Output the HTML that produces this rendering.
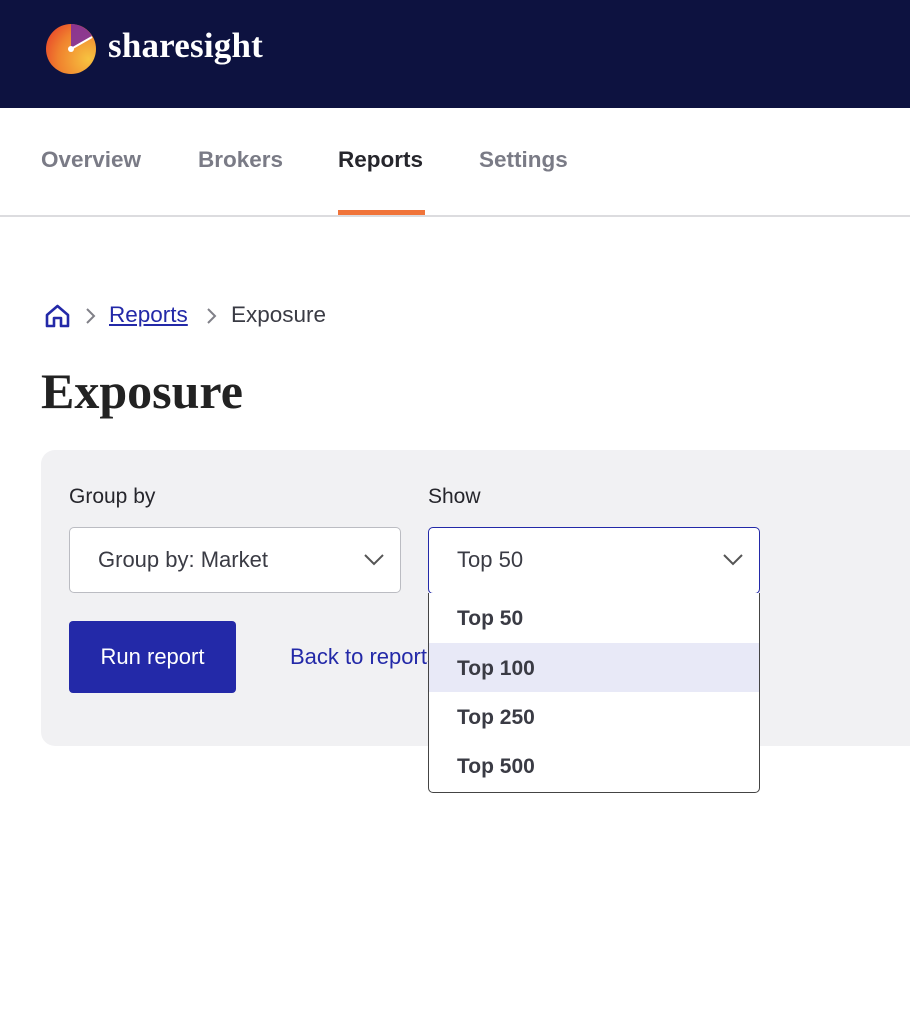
<!DOCTYPE html>
<html><head><style>
body{margin:0;width:910px;height:1036px;background:#fff;font-family:"Liberation Sans",sans-serif;position:relative;overflow:hidden}
.hdr{position:absolute;left:0;top:0;width:910px;height:108px;background:#0d1240}
.logo{position:absolute;left:46px;top:24px;width:50px;height:50px;border-radius:50%;background:radial-gradient(circle at 85% 70%,#f7c340,#f0822e 55%,#e7442a 90%)}
.brand{position:absolute;left:108px;top:26px;color:#fff;font:bold 35px "Liberation Serif",serif;letter-spacing:0.2px}
.nav{position:absolute;top:147px;font-size:22.5px;font-weight:bold;color:#7a7b86}
.line{position:absolute;left:0;top:215px;width:910px;height:2px;background:#dcdcdf}
.ul{position:absolute;left:338px;top:210px;width:87px;height:5px;background:#f0743a}
.panel{position:absolute;left:41px;top:450px;width:900px;height:296px;background:#f1f1f3;border-radius:14px}
.lbl{position:absolute;top:485px;font-size:21px;color:#26262c}
.sel{position:absolute;top:527px;width:332px;height:66px;box-sizing:border-box;border:1.5px solid #bbbcc2;border-radius:5px;background:#fff;font-size:22px;color:#3a3b44;padding:19px 0 0 28px}
.btn{position:absolute;left:69px;top:621px;width:167px;height:72px;background:#2329a8;border-radius:4px;color:#fff;font-size:22px;text-align:center;line-height:72px}
.menu{position:absolute;left:428px;top:593px;width:332px;height:200px;box-sizing:border-box;border:1.5px solid #444;border-top:none;border-radius:0 0 5px 5px;background:#fff}
.opt{height:49px;line-height:52px;padding-left:28px;font-size:21px;font-weight:bold;color:#3a3b44}
</style></head><body>
<div class="hdr"></div>
<div class="logo"><svg width="50" height="50" style="position:absolute;left:0;top:0"><path d="M25 0 A25 25 0 0 1 46 12 L25 25Z" fill="#7b2aa0" opacity=".85"/><line x1="25" y1="25" x2="46" y2="13" stroke="#fff" stroke-width="2"/><circle cx="25" cy="25" r="3" fill="#fff"/></svg></div>
<div class="brand">sharesight</div>
<div class="nav" style="left:41px">Overview</div>
<div class="nav" style="left:198px">Brokers</div>
<div class="nav" style="left:338px;color:#26262c">Reports</div>
<div class="nav" style="left:479px">Settings</div>
<div class="line"></div><div class="ul"></div>
<svg style="position:absolute;left:44px;top:303px" width="27" height="26" viewBox="0 0 27 26"><path d="M3 12 L13.5 3 L24 12 V23 H17 V15 H10 V23 H3Z" fill="none" stroke="#2329a8" stroke-width="2.6" stroke-linejoin="round"/></svg>
<svg style="position:absolute;left:84px;top:306px" width="12" height="20"><path d="M3 3 L10 10 L3 17" fill="none" stroke="#808088" stroke-width="2"/></svg>
<div style="position:absolute;left:109px;top:302px;font-size:22.5px;color:#2329a8;text-decoration:underline">Reports</div>
<svg style="position:absolute;left:205px;top:306px" width="12" height="20"><path d="M3 3 L10 10 L3 17" fill="none" stroke="#808088" stroke-width="2"/></svg>
<div style="position:absolute;left:231px;top:302px;font-size:22.5px;color:#3a3b44">Exposure</div>
<div style="position:absolute;left:41px;top:362px;font:bold 50px 'Liberation Serif',serif;color:#222">Exposure</div>
<div class="panel"></div>
<div class="lbl" style="left:69px">Group by</div>
<div class="lbl" style="left:428px">Show</div>
<div class="sel" style="left:69px">Group by: Market</div>
<div class="sel" style="left:428px;border-color:#2329a8;height:67px">Top 50</div>
<svg style="position:absolute;left:363px;top:553px" width="22" height="14"><path d="M2 2 L11 11 L20 2" fill="none" stroke="#555" stroke-width="2"/></svg>
<svg style="position:absolute;left:722px;top:553px" width="22" height="14"><path d="M2 2 L11 11 L20 2" fill="none" stroke="#555" stroke-width="2"/></svg>
<div class="btn">Run report</div>
<div style="position:absolute;left:290px;top:644px;font-size:22px;color:#2329a8">Back to reports</div>
<div class="menu">
<div class="opt" style="height:50px;line-height:52px">Top 50</div>
<div class="opt" style="background:#e8e9f7">Top 100</div>
<div class="opt">Top 250</div>
<div class="opt">Top 500</div>
</div>
</body></html>
